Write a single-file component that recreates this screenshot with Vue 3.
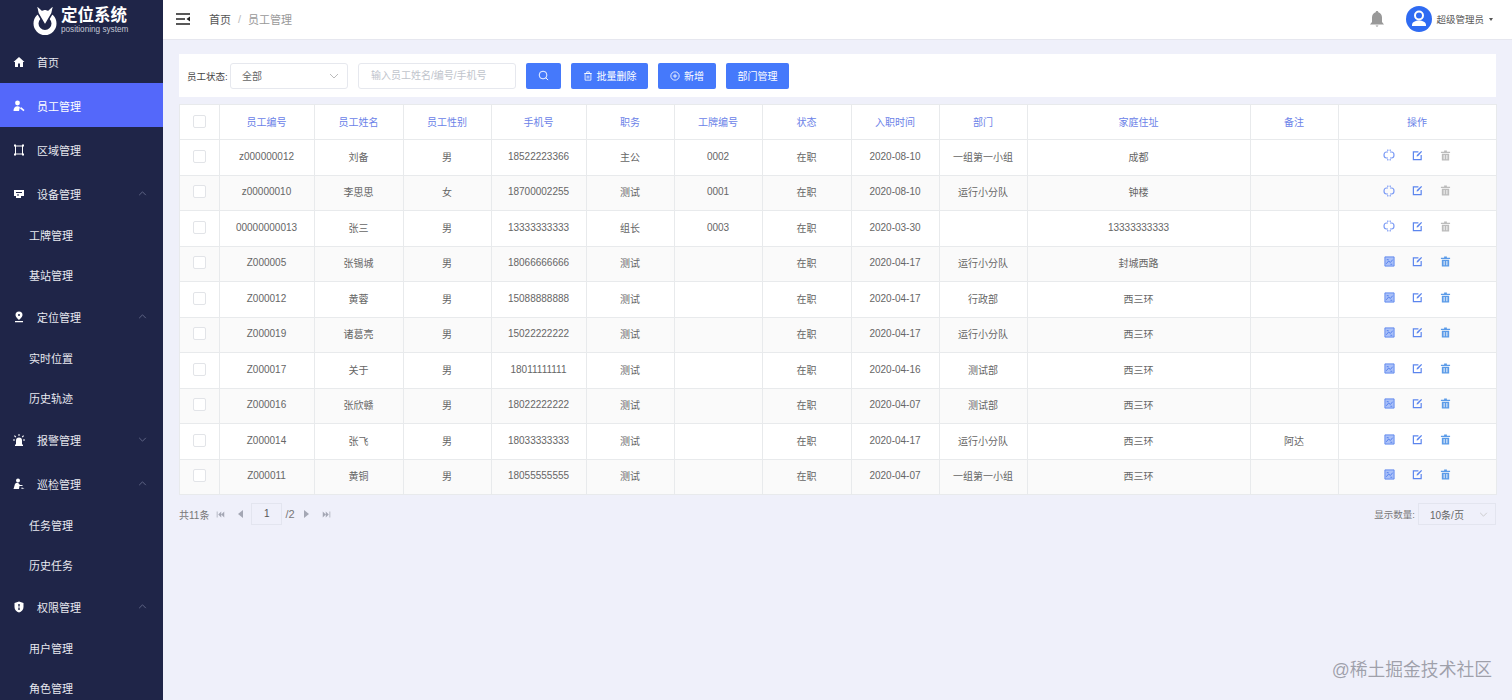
<script setup>
const menu = [
  { name: "首页", icon: "home" },
  { name: "员工管理", icon: "staff", active: true },
  { name: "区域管理", icon: "area" },
  { name: "设备管理", icon: "device", arrow: "up", children: ["工牌管理", "基站管理"] },
  { name: "定位管理", icon: "pin", arrow: "up", children: ["实时位置", "历史轨迹"] },
  { name: "报警管理", icon: "alarm", arrow: "down" },
  { name: "巡检管理", icon: "patrol", arrow: "up", children: ["任务管理", "历史任务"] },
  { name: "权限管理", icon: "shield", arrow: "up", children: ["用户管理", "角色管理"] },
];

const columns = ["员工编号", "员工姓名", "员工性别", "手机号", "职务", "工牌编号", "状态", "入职时间", "部门", "家庭住址", "备注", "操作"];
const widths = [40, 95, 89, 88, 95, 88, 88, 89, 88, 88, 223, 88, 158];

const rows = [
  ["z000000012", "刘备", "男", "18522223366", "主公", "0002", "在职", "2020-08-10", "一组第一小组", "成都", "", true],
  ["z00000010", "李思思", "女", "18700002255", "测试", "0001", "在职", "2020-08-10", "运行小分队", "钟楼", "", true],
  ["00000000013", "张三", "男", "13333333333", "组长", "0003", "在职", "2020-03-30", "", "13333333333", "", true],
  ["Z000005", "张锡城", "男", "18066666666", "测试", "", "在职", "2020-04-17", "运行小分队", "封城西路", "", false],
  ["Z000012", "黄蓉", "男", "15088888888", "测试", "", "在职", "2020-04-17", "行政部", "西三环", "", false],
  ["Z000019", "诸葛亮", "男", "15022222222", "测试", "", "在职", "2020-04-17", "运行小分队", "西三环", "", false],
  ["Z000017", "关于", "男", "18011111111", "测试", "", "在职", "2020-04-16", "测试部", "西三环", "", false],
  ["Z000016", "张欣赣", "男", "18022222222", "测试", "", "在职", "2020-04-07", "测试部", "西三环", "", false],
  ["Z000014", "张飞", "男", "18033333333", "测试", "", "在职", "2020-04-17", "运行小分队", "西三环", "阿达", false],
  ["Z000011", "黄铜", "男", "18055555555", "测试", "", "在职", "2020-04-07", "一组第一小组", "西三环", "", false],
];
</script>

<template>
  <div class="page">
    <aside class="side">
      <div class="logo">
        <svg class="logo-mark" viewBox="0 0 24 31" width="24" height="31">
          <circle cx="12" cy="19.500" r="9" fill="none" stroke="#fff" stroke-width="5" />
          <path fill="#fff" stroke="#1f2548" stroke-width="1.500" stroke-linejoin="round" d="M3 .5l6 5.500 3-1 3 1 6-5.500-2 9-7 12-7-12z" />
        </svg>
        <div class="logo-text">
          <strong>定位系统</strong>
          <span>positioning system</span>
        </div>
      </div>
      <nav>
        <template v-for="item in menu" :key="item.name">
          <div class="nav-item" :class="{ active: item.active }">
            <svg class="nav-icon" viewBox="0 0 12 12" width="12" height="12" fill="#fff">
              <path v-if="item.icon === 'home'" d="M6 1L.5 6H2v5h3V7.500h2V11h3V6h1.500z" />
              <g v-else-if="item.icon === 'staff'">
                <circle cx="4.500" cy="3" r="2.400" />
                <path d="M.5 11c0-3 1.500-4.800 4-4.800 1 0 1.800.3 2.400.8L6 11z" />
                <path d="M8 7l3.500 3-1 1.200L7 8.500z" />
              </g>
              <path v-else-if="item.icon === 'area'" d="M1 .5h2v1h6v-1h2v2h-1v7h1v2H9v-1H3v1H1v-2h1v-7H1zM3 2.500v7h6v-7z" fill-rule="evenodd" />
              <path v-else-if="item.icon === 'device'" fill-rule="evenodd" d="M1 2h10v6H8v2H3V8H1zM3 4v1h6V4zM4 6.500v1h2v-1z" />
              <path v-else-if="item.icon === 'pin'" fill-rule="evenodd" d="M6 .5a3.500 3.500 0 0 1 3.500 3.500C9.500 6 6 9 6 9S2.500 6 2.500 4A3.500 3.500 0 0 1 6 .5zM6 3a1 1 0 1 0 0 2 1 1 0 0 0 0-2zM2 10h8v1.300H2z" />
              <g v-else-if="item.icon === 'alarm'">
                <path d="M3 11V6.500a3 3 0 0 1 6 0V11z" />
                <path d="M2 10.500h8V12H2zM5.500 0h1v2h-1zM1 2l.8-.7 1.400 1.500-.8.7zM11 2l-.8-.7-1.400 1.500.8.7zM0 5.500h2v1H0zM10 5.500h2v1h-2z" />
              </g>
              <g v-else-if="item.icon === 'patrol'">
                <circle cx="5" cy="2.500" r="2" />
                <path d="M.5 11l1.500-5c.4-1 1.500-1.300 3-1.300L7 7h2.500v1H6.500L6 11z" />
                <path d="M8.500 9.500l3 .8-3 .8z" />
              </g>
              <path v-else fill-rule="evenodd" d="M6 .5l4.500 1.500v4c0 2.800-2 4.600-4.500 5.500C3.500 10.600 1.500 8.800 1.500 6V2zM5.300 3v2.500h1.400V3zM5.300 6.500v2.500h1.400V6.500z" />
            </svg>
            <span>{{ item.name }}</span>
            <svg v-if="item.arrow" class="nav-arrow" :class="{ flip: item.arrow === 'down' }" viewBox="0 0 10 6" width="9" height="5">
              <path d="M1 5l4-4 4 4" fill="none" stroke="#6b7190" stroke-width="1" />
            </svg>
          </div>
          <div v-for="child in item.children" :key="child" class="nav-sub">{{ child }}</div>
        </template>
      </nav>
    </aside>

    <div class="main">
      <header class="top">
        <svg class="toggle" viewBox="0 0 14 12" width="14" height="12">
          <path d="M0 1h14M0 6h9M0 11h14" stroke="#222" stroke-width="1.500" fill="none" />
          <path d="M14 3.500v5L10.500 6z" fill="#222" />
        </svg>
        <span class="crumb">首页</span>
        <span class="crumb-sep">/</span>
        <span class="crumb-now">员工管理</span>
        <svg class="bell" viewBox="0 0 16 18" width="16" height="18">
          <path fill="#999" d="M8 1c.8 0 1.300.5 1.300 1.200C11.700 2.900 13 5 13 7.500V12l2 2.500H1L3 12V7.500C3 5 4.300 2.900 6.700 2.200 6.700 1.500 7.200 1 8 1z" />
          <path fill="#999" d="M6.500 15.500h3L8 17z" />
        </svg>
        <span class="avatar">
          <svg viewBox="0 0 26 26" width="26" height="26">
            <circle cx="13" cy="13" r="13" fill="#2f6bf2" />
            <circle cx="13" cy="9.500" r="4" fill="none" stroke="#fff" stroke-width="2" />
            <path fill="#fff" d="M6 19c0-3 3.500-4.500 7-4.500s7 1.500 7 4.500v1H6z" />
          </svg>
        </span>
        <span class="user">超级管理员</span>
        <i class="caret"></i>
      </header>

      <div class="content">
        <div class="filter">
          <label>员工状态:</label>
          <div class="select">
            <span>全部</span>
            <svg viewBox="0 0 10 6" width="10" height="6"><path d="M1 1l4 4 4-4" fill="none" stroke="#bbb" /></svg>
          </div>
          <div class="search">输入员工姓名/编号/手机号</div>
          <button class="btn btn-search">
            <svg viewBox="0 0 12 12" width="11" height="11"><circle cx="5.500" cy="5.500" r="4.200" fill="none" stroke="#fff" /><path d="M8.500 8.500l2.500 2.500" stroke="#fff" /></svg>
          </button>
          <button class="btn btn-del">
            <svg viewBox="0 0 12 12" width="10" height="10"><path d="M2.500 3h7v8h-7zM1.500 3h9M4.500 3V1h3v2M5 5.500v3.500M7 5.500v3.500" fill="none" stroke="#fff" /></svg>
            批量删除
          </button>
          <button class="btn btn-add">
            <svg viewBox="0 0 12 12" width="10" height="10"><circle cx="6" cy="6" r="5" fill="none" stroke="#fff" /><path d="M3.500 6h5M6 3.500v5" stroke="#fff" /></svg>
            新增
          </button>
          <button class="btn btn-dept">部门管理</button>
        </div>

        <table class="grid">
          <colgroup>
            <col v-for="(w, i) in widths" :key="i" :style="{ width: w + 'px' }" />
          </colgroup>
          <thead>
            <tr>
              <th><i class="check"></i></th>
              <th v-for="col in columns" :key="col">{{ col }}</th>
            </tr>
          </thead>
          <tbody>
            <tr v-for="row in rows" :key="row[0]">
              <td><i class="check"></i></td>
              <td v-for="n in 11" :key="n">{{ row[n - 1] }}</td>
              <td>
                <div class="ops">
                  <svg v-if="row[11]" viewBox="0 0 12 12" width="12" height="12" fill="none" stroke="#7d9cf5" stroke-width="1.200">
                    <path d="M5 3H3.500C2 3 1 4.500 1 6s1 3 2.500 3H5M7 3h1.500C10 3 11 4.500 11 6s-1 3-2.500 3H7" />
                    <path d="M4.500 .5v1.500M6 .5v1.500M7.500 .5v1.500M4.500 10v1.500M6 10v1.500M7.500 10v1.500" stroke-width=".8" />
                  </svg>
                  <svg v-else viewBox="0 0 12 12" width="11" height="11">
                    <path fill="#a9c0f8" stroke="#5b85ee" d="M1 1h10v10H1z" />
                    <path d="M2.500 8.500l2.500-3 2 1.500 2.500-3M3 4h2M7 9h2" fill="none" stroke="#4f7cec" />
                  </svg>
                  <svg viewBox="0 0 12 12" width="11" height="11" fill="none" stroke="#5b85ee">
                    <path d="M7 2H1.500v8.500H10V5.500" stroke-width="1.300" />
                    <path d="M5 7l.3-1.500L10 1l1 1-4.500 4.700z" fill="#5b85ee" stroke="none" />
                  </svg>
                  <svg viewBox="0 0 12 12" width="11" height="11" :fill="row[11] ? '#bcbcbc' : '#5b9be8'">
                    <path d="M4.500 0.500h3V2H11v1.200H1V2h3.500z" />
                    <path fill-rule="evenodd" d="M2 4h8v7.500H2zM4 5.500v4.500h1V5.500zM7 5.500v4.500h1V5.500z" />
                  </svg>
                </div>
              </td>
            </tr>
          </tbody>
        </table>

        <div class="pager">
          <span>共11条</span>
          <svg class="pg first" viewBox="0 0 12 8" width="9" height="7"><path d="M1 0h1v8H1zM7 0v8L3 4zM11 0v8L7 4z" /></svg>
          <svg class="pg prev" viewBox="0 0 6 8" width="6" height="8"><path d="M6 0v8L1 4z" /></svg>
          <div class="page-box">1</div>
          <span class="total">/2</span>
          <svg class="pg next" viewBox="0 0 6 8" width="6" height="8"><path d="M0 0v8l5-4z" /></svg>
          <svg class="pg last" viewBox="0 0 12 8" width="9" height="7"><path d="M10 0h1v8h-1zM1 0v8l4-4zM5 0v8l4-4z" /></svg>
          <span class="size-label">显示数量:</span>
          <div class="size-select">
            <span>10条/页</span>
            <svg viewBox="0 0 10 6" width="9" height="5"><path d="M1 1l4 4 4-4" fill="none" stroke="#c4c4c4" /></svg>
          </div>
        </div>
      </div>
    </div>

    <div class="mark">@稀土掘金技术社区</div>
  </div>
</template>

<style scoped>
.page {
  position: relative;
  display: flex;
  height: 700px;
  overflow: hidden;
  font-family: "Liberation Sans", "Noto Sans CJK SC", sans-serif;
  font-size: 10px;
  color: #666;
  background: #eff0fa;
}
.side {
  width: 163px;
  flex-shrink: 0;
  background: #1f2548;
  color: #e8e9f0;
  font-size: 11px;
}
.logo {
  display: flex;
  align-items: center;
  gap: 4px;
  height: 39px;
  padding-left: 33px;
  box-sizing: border-box;
}
.logo-mark {
  flex-shrink: 0;
}
.logo-text {
  display: flex;
  flex-direction: column;
  color: #fff;
  line-height: 1;
  margin-top: 1px;
}
.logo-text strong {
  font-size: 16.5px;
  font-weight: 700;
  line-height: 19px;
}
.logo-text span {
  font-size: 8.2px;
  line-height: 9px;
  color: #c3c6d4;
}
.nav-item {
  display: flex;
  align-items: center;
  height: 44px;
  box-sizing: border-box;
  padding: 1px 0 0 13px;
}
.nav-item.active {
  background: #5468fa;
  color: #fff;
}
.nav-icon {
  flex-shrink: 0;
  margin-right: 12px;
}
.nav-arrow {
  margin-left: auto;
  margin-right: 16px;
}
.nav-arrow.flip {
  transform: rotate(180deg);
}
.nav-sub {
  height: 39.5px;
  line-height: 43px;
  padding-left: 29px;
}
.main {
  flex: 1;
  min-width: 0;
}
.top {
  display: flex;
  align-items: center;
  height: 40px;
  box-sizing: border-box;
  padding: 0 19px 2px 13px;
  background: #fff;
  border-bottom: 1px solid #e6e7ef;
  font-size: 11px;
}
.toggle {
  margin-right: 19px;
}
.crumb {
  color: #555;
}
.crumb-sep {
  margin: 0 7px;
  color: #bbb;
}
.crumb-now {
  color: #999;
}
.bell {
  margin-left: auto;
  margin-right: 21px;
}
.avatar {
  display: flex;
  margin-right: 4px;
}
.user {
  font-size: 9.5px;
  color: #555;
}
.caret {
  width: 0;
  height: 0;
  margin: 1px 0 0 5px;
  border: 2.5px solid transparent;
  border-top: 3px solid #555;
  border-bottom: 0;
}
.content {
  padding: 14px 16px 0;
}
.filter {
  display: flex;
  align-items: center;
  height: 43px;
  padding: 0 8px;
  background: #fff;
  color: #444;
}
.filter label {
  width: 43px;
  flex-shrink: 0;
  font-size: 9.5px;
}
.select {
  display: flex;
  align-items: center;
  justify-content: space-between;
  width: 118px;
  height: 26px;
  box-sizing: border-box;
  padding: 0 8px 0 11px;
  border: 1px solid #e6e8ee;
  border-radius: 3px;
  color: #666;
}
.search {
  width: 158px;
  height: 26px;
  line-height: 24px;
  box-sizing: border-box;
  margin: 0 10px;
  padding-left: 12px;
  border: 1px solid #e6e8ee;
  border-radius: 3px;
  color: #c0c4cc;
}
.btn {
  display: flex;
  align-items: center;
  justify-content: center;
  gap: 4px;
  height: 26px;
  padding: 0;
  margin-right: 10px;
  border: 0;
  border-radius: 2px;
  background: #4579fb;
  color: #fff;
  font: inherit;
}
.btn-search {
  width: 35px;
}
.btn-del {
  width: 77px;
}
.btn-add {
  width: 58px;
}
.btn-dept {
  width: 63px;
}
.grid {
  width: 1317px;
  margin-top: 7px;
  table-layout: fixed;
  border-collapse: collapse;
  background: #fff;
}
.grid th,
.grid td {
  height: 35.5px;
  padding: 0 1px 2px 0;
  box-sizing: border-box;
  border: 1px solid #e8eaec;
  text-align: center;
  font-weight: 400;
}
.grid th {
  height: 35px;
  color: #6b82e8;
}
.grid tbody tr:nth-child(even) {
  background: #fafafa;
}
.check {
  display: inline-block;
  width: 11px;
  height: 11px;
  vertical-align: middle;
  border: 1px solid #e2e4e8;
  border-radius: 2px;
  background: #fff;
}
.ops {
  display: flex;
  justify-content: center;
  align-items: center;
  gap: 17px;
  margin-top: -2px;
}
.pager {
  display: flex;
  align-items: center;
  height: 22px;
  margin-top: 8px;
  color: #777;
}
.pg {
  fill: #a4a7b4;
  flex-shrink: 0;
}
.first {
  margin-left: 7px;
}
.prev {
  margin-left: 12px;
}
.page-box {
  width: 31px;
  height: 22px;
  line-height: 20px;
  box-sizing: border-box;
  margin-left: 8px;
  text-align: center;
  border: 1px solid #e3e5ef;
  color: #555;
}
.total {
  margin-left: 3px;
  font-size: 11px;
}
.next {
  margin-left: 9px;
}
.last {
  margin-left: 12px;
}
.size-label {
  margin-left: auto;
  margin-right: 3px;
  font-size: 9.5px;
}
.size-select {
  display: flex;
  align-items: center;
  justify-content: space-between;
  width: 78px;
  height: 22px;
  box-sizing: border-box;
  padding: 0 7px 0 11px;
  border: 1px solid #e3e5ef;
  color: #666;
}
.mark {
  position: absolute;
  right: 20px;
  bottom: 18px;
  font-size: 17.8px;
  line-height: 24px;
  color: rgba(80, 80, 90, 0.5);
}
</style>
